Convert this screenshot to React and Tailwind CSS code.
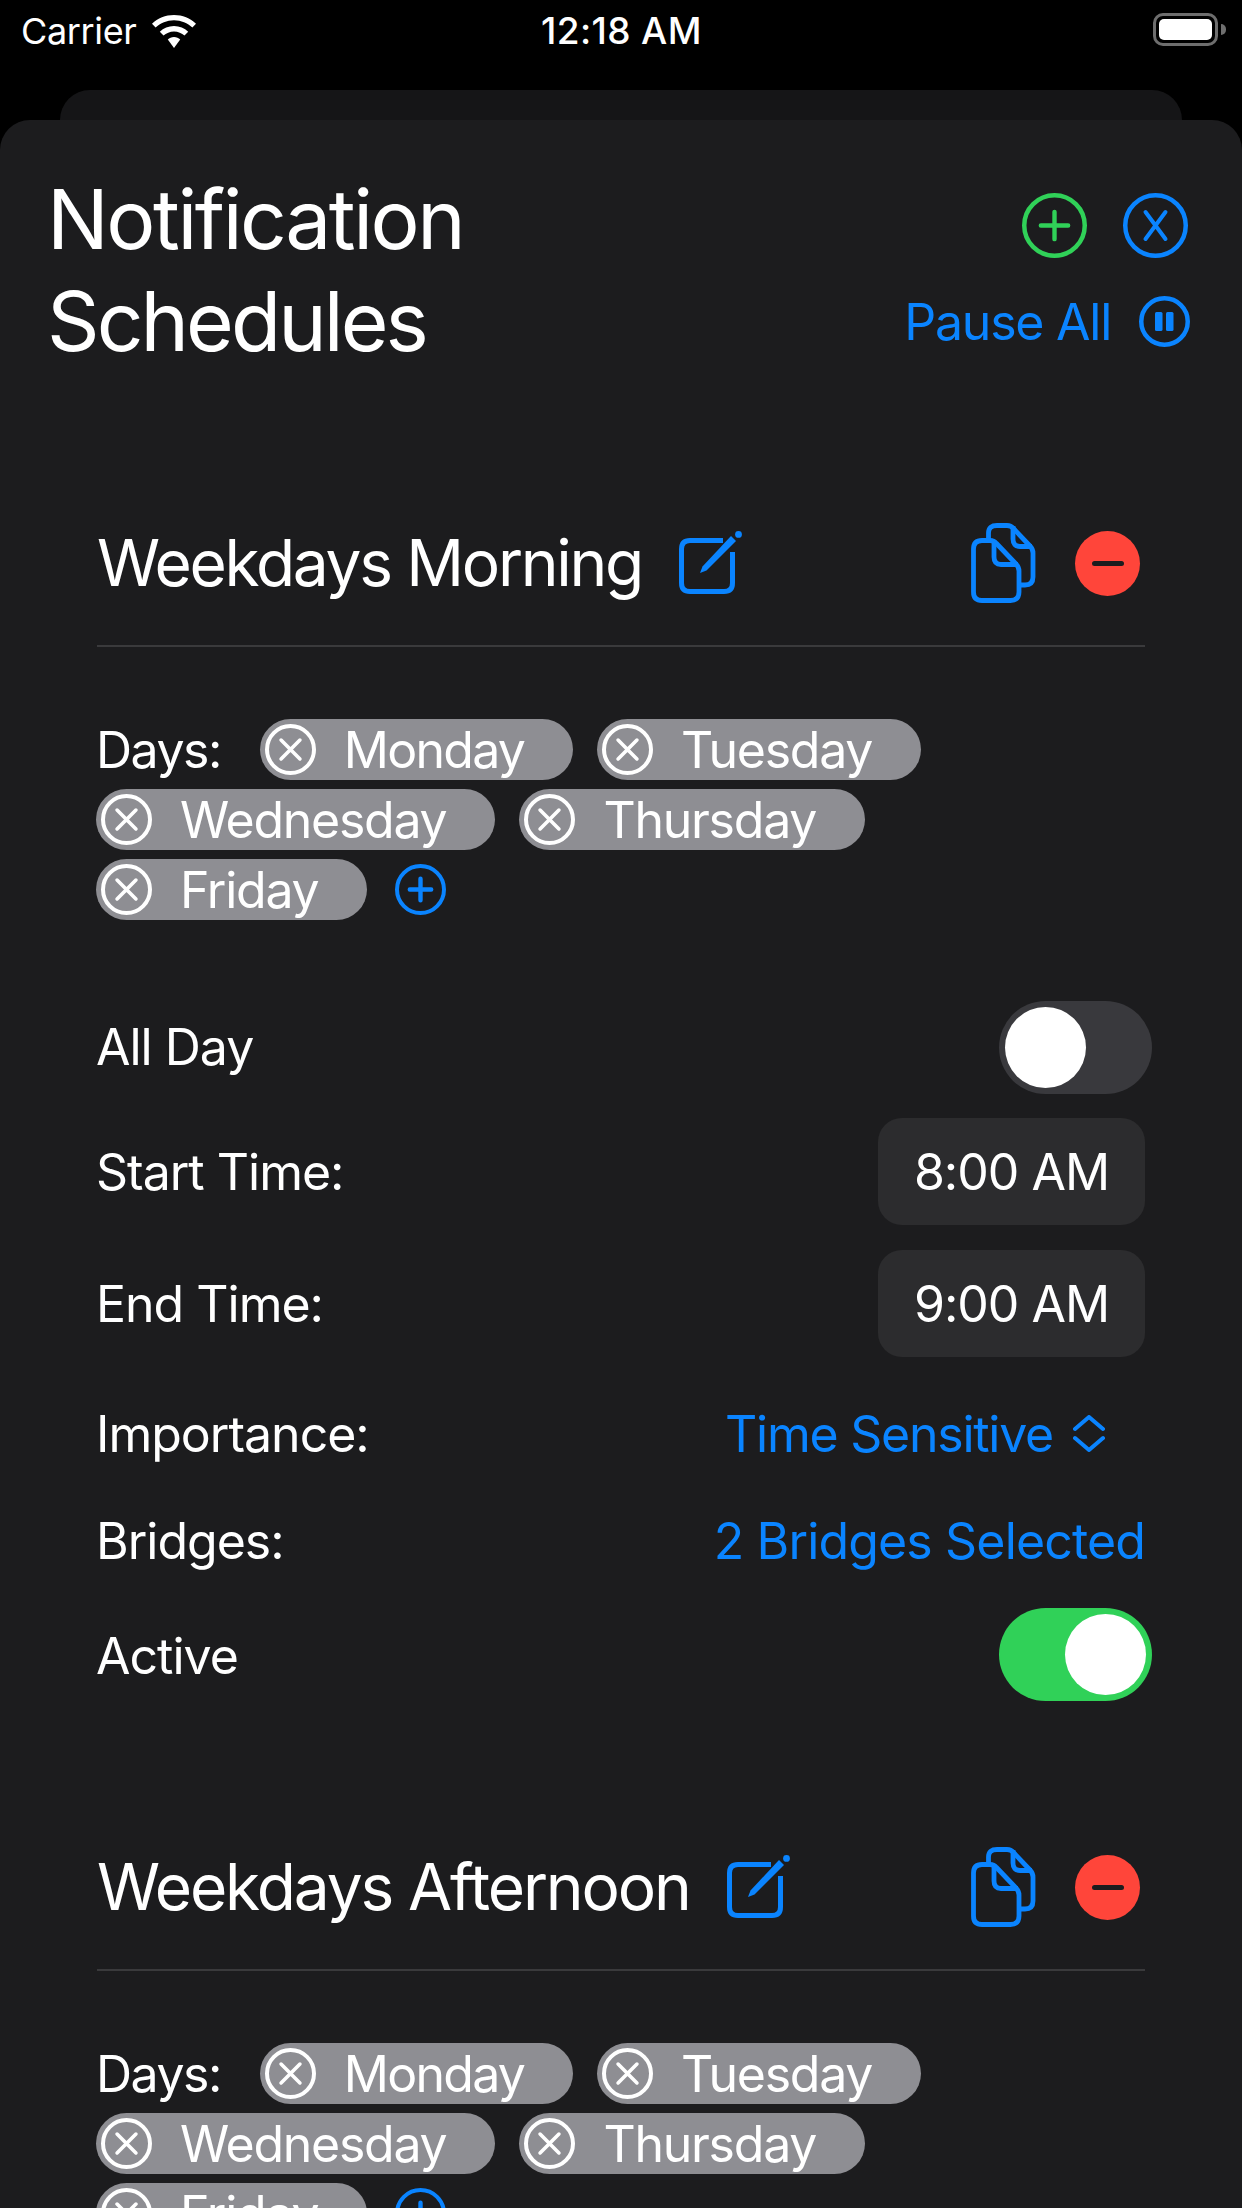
const FONT = "font-['Inter','Liberation_Sans',sans-serif]";
const BLUE = '#0a84ff';

function CircleIcon({ size = 65, color = BLUE, stroke = 4.5, kind = 'x' }) {
  const c = size / 2;
  const r = c - stroke / 2;
  const a = size * 0.185;
  return (
    <svg width={size} height={size} viewBox={`0 0 ${size} ${size}`} fill="none" stroke={color} strokeWidth={stroke} strokeLinecap="round" className="shrink-0">
      <circle cx={c} cy={c} r={r} />
      {kind === 'x' && <path d={`M${c - a} ${c - a}L${c + a} ${c + a}M${c + a} ${c - a}L${c - a} ${c + a}`} strokeWidth={3.6} />}
      {kind === 'X' && <path d={`M${c - 10} ${c - 13.5}L${c + 10} ${c + 13.5}M${c + 10} ${c - 13.5}L${c - 10} ${c + 13.5}`} strokeWidth={4} />}
      {kind === 'plus' && <path d={`M${c - size * 0.21} ${c}H${c + size * 0.21}M${c} ${c - size * 0.21}V${c + size * 0.21}`} strokeWidth={4.4} />}
      {kind === 'pause' && (
        <g fill={color} stroke="none">
          <rect x={c - 9.5} y={c - 9.5} width="7.5" height="19" rx="1.5" />
          <rect x={c + 1.5} y={c - 9.5} width="7.5" height="19" rx="1.5" />
        </g>
      )}
    </svg>
  );
}

function EditIcon() {
  return (
    <svg width="66" height="64" viewBox="0 0 66 64" fill="none" className="shrink-0">
      <path d="M44 9.5H11Q2.5 9.5 2.5 18V52Q2.5 60.5 11 60.5H45Q53.5 60.5 53.5 52V21" stroke={BLUE} strokeWidth="5" />
      <path d="M21 42L23.5 35.5L52 5L57 10L27.5 39.5Z" fill={BLUE} />
      <circle cx="59.5" cy="3.4" r="3.4" fill={BLUE} />
    </svg>
  );
}

function CopyIcon() {
  return (
    <svg width="66" height="80" viewBox="0 0 66 80" fill="none" stroke={BLUE} strokeWidth="4.8" strokeLinejoin="round" className="shrink-0">
      <path d="M18.5 16V10Q18.5 2.5 27 2.5H37Q41 2.5 43.5 5.5L60 23Q63 26 63 30V54Q63 62 55 62H50" />
      <path d="M43 3V16Q43 23.5 50 23.5H62" />
      <path d="M12 17.5H20Q24 17.5 26.5 20.5L46 41Q49 44 49 48V69Q49 77.5 40.5 77.5H12Q3.5 77.5 3.5 69V26Q3.5 17.5 12 17.5Z" />
      <path d="M24 18V34Q24 41.5 31 41.5H48" />
    </svg>
  );
}

function MinusIcon() {
  return (
    <div className="w-[65px] h-[65px] rounded-full bg-[#ff453a] flex items-center justify-center shrink-0">
      <div className="w-[32px] h-[5px] rounded-full bg-[#1c1c1e]" />
    </div>
  );
}

function Chip({ label, tight }) {
  return (
    <div className="h-[61px] rounded-full bg-[#8e8e93] flex items-center pl-[5px] pr-[49px]">
      <CircleIcon size={51} color="#fff" stroke={4} kind="x" />
      <span className={`ml-[28px] pt-[2px] leading-[57px] text-white ${tight ? 'tracking-[-0.035em]' : 'tracking-[-0.025em]'}`}>{label}</span>
    </div>
  );
}

function Toggle({ on }) {
  return (
    <div className={`-mr-[7px] w-[153px] h-[93px] rounded-full p-[6px] flex shrink-0 ${on ? 'bg-[#30d158] justify-end' : 'bg-[#39393d] justify-start'}`}>
      <div className="w-[81px] h-[81px] rounded-full bg-white" />
    </div>
  );
}

function TimeButton({ text }) {
  return (
    <div className="w-[267px] h-[107px] pt-[2px] rounded-[24px] bg-[#2c2c2e] flex items-center justify-center text-white">
      {text}
    </div>
  );
}

function Section({ name, nameClass, className = '' }) {
  const body = 'text-[50px] leading-[57px] tracking-[-0.02em] text-white';
  return (
    <section className={`px-[97px] shrink-0 ${className}`}>
      <div className="h-[80px] flex items-center">
        <span className={`text-[64px] leading-[80px] text-white ${nameClass}`}>{name}</span>
        <div className="ml-[37px]"><EditIcon /></div>
        <div className="ml-auto flex items-center gap-[39px] pr-[5px]">
          <CopyIcon />
          <MinusIcon />
        </div>
      </div>
      <div className="mt-[42px] h-[2px] bg-[#3a3a3c]" />
      <div className="mt-[72px] flex flex-wrap items-center gap-x-[24px] gap-y-[9px] -ml-[1px] text-[50px] leading-[57px] tracking-[-0.02em]">
        <span className="text-white mr-[15px] pt-[2px] tracking-[-0.03em]">Days:</span>
        {['Monday', 'Tuesday', 'Wednesday', 'Thursday', 'Friday'].map((d) => <Chip key={d} label={d} tight={d === 'Monday'} />)}
        <div className="ml-[4px]"><CircleIcon size={51} kind="plus" stroke={4} /></div>
      </div>
      <div className={`mt-[81px] -ml-[1px] flex items-center justify-between h-[93px] ${body}`}>
        <span>All Day</span>
        <Toggle />
      </div>
      <div className={`mt-[24px] -ml-[1px] flex items-center justify-between ${body}`}>
        <span className="pt-[2px]">Start Time:</span>
        <TimeButton text="8:00 AM" />
      </div>
      <div className={`mt-[25px] -ml-[1px] flex items-center justify-between ${body}`}>
        <span className="pt-[2px]">End Time:</span>
        <TimeButton text="9:00 AM" />
      </div>
      <div className={`mt-[46px] -ml-[1px] h-[61px] flex items-center justify-between ${body}`}>
        <span className="pt-[2px]">Importance:</span>
        <div className="flex items-center gap-[20px] pr-[40px] text-[#0a84ff]">
          <span className="pt-[2px] tracking-[-0.025em]">Time Sensitive</span>
          <svg width="32" height="37" viewBox="0 0 32 37" fill="none" stroke={BLUE} strokeWidth="4" strokeLinecap="round" strokeLinejoin="round">
            <path d="M2 14L16 2L30 14M2 23L16 35L30 23" />
          </svg>
        </div>
      </div>
      <div className={`mt-[47px] -ml-[1px] h-[61px] flex items-center justify-between ${body}`}>
        <span>Bridges:</span>
        <span className="text-[#0a84ff] tracking-[-0.017em]">2 Bridges Selected</span>
      </div>
      <div className={`mt-[36px] -ml-[1px] flex items-center justify-between h-[93px] ${body}`}>
        <span className="pt-[3px]">Active</span>
        <Toggle on />
      </div>
    </section>
  );
}

export default function App() {
  return (
    <div className={`w-[1242px] h-[2208px] overflow-hidden bg-black flex flex-col ${FONT}`}>
      <header className="h-[90px] shrink-0 relative text-white text-[36px] leading-[44px]">
        <div className="absolute left-[21px] top-[9px] flex items-center gap-[15px]">
          <span className="tracking-[-0.01em]">Carrier</span>
          <svg width="46" height="33" viewBox="0 0 46 33" fill="#fff">
            <path d="M23 0C14.5 0 6.7 3.3 1 8.8L4.6 12.6C9.4 8 15.9 5.2 23 5.2S36.6 8 41.4 12.6L45 8.8C39.3 3.3 31.5 0 23 0Z" />
            <path d="M23 11C17.5 11 12.5 13.2 8.8 16.7L12.5 20.6C15.2 18 18.9 16.4 23 16.4S30.8 18 33.5 20.6L37.2 16.7C33.5 13.2 28.5 11 23 11Z" />
            <path d="M23 22C20.5 22 18.4 23 16.8 24.5L23 33L29.2 24.5C27.6 23 25.5 22 23 22Z" />
          </svg>
        </div>
        <span className="absolute left-[541px] top-[9px] text-[37px] font-medium tracking-[0.01em]">12:18 AM</span>
        <div className="absolute left-[1153px] top-[13px] flex items-center gap-[3px]">
          <div className="w-[65px] h-[33px] rounded-[10px] border-[3px] border-[#6e6e6e] p-[3px]">
            <div className="w-full h-full rounded-[5px] bg-white" />
          </div>
          <div className="w-[5px] h-[11px] rounded-r-full bg-[#6e6e6e]" />
        </div>
      </header>
      <div className="h-[30px] mx-[60px] shrink-0 rounded-t-[30px] bg-[#151517]" />
      <main className="flex-1 rounded-t-[30px] bg-[#1c1c1e] flex flex-col overflow-hidden">
        <div className="shrink-0 pt-[49px] pl-[47px] pr-[52px] flex justify-between">
          <h1 className="text-[82px] leading-[102px] font-normal tracking-[-0.03em] text-white">Notification<br /><span className="tracking-[-0.036em]">Schedules</span></h1>
          <div className="pt-[24px] flex flex-col items-end">
            <div className="flex items-center gap-[36px] pr-[2px]">
              <CircleIcon size={65} color="#30d158" kind="plus" stroke={4.5} />
              <CircleIcon size={65} kind="X" stroke={4.5} />
            </div>
            <div className="mt-[38px] flex items-center gap-[28px]">
              <span className="pt-[1px] text-[50px] leading-[50px] tracking-[-0.025em] text-[#0a84ff]">Pause All</span>
              <CircleIcon size={51} kind="pause" stroke={4.5} />
            </div>
          </div>
        </div>
        <Section name="Weekdays Morning" nameClass="tracking-[-0.036em]" className="mt-[150px]" />
        <Section name="Weekdays Afternoon" nameClass="tracking-[-0.033em]" className="mt-[146px]" />
      </main>
    </div>
  );
}
